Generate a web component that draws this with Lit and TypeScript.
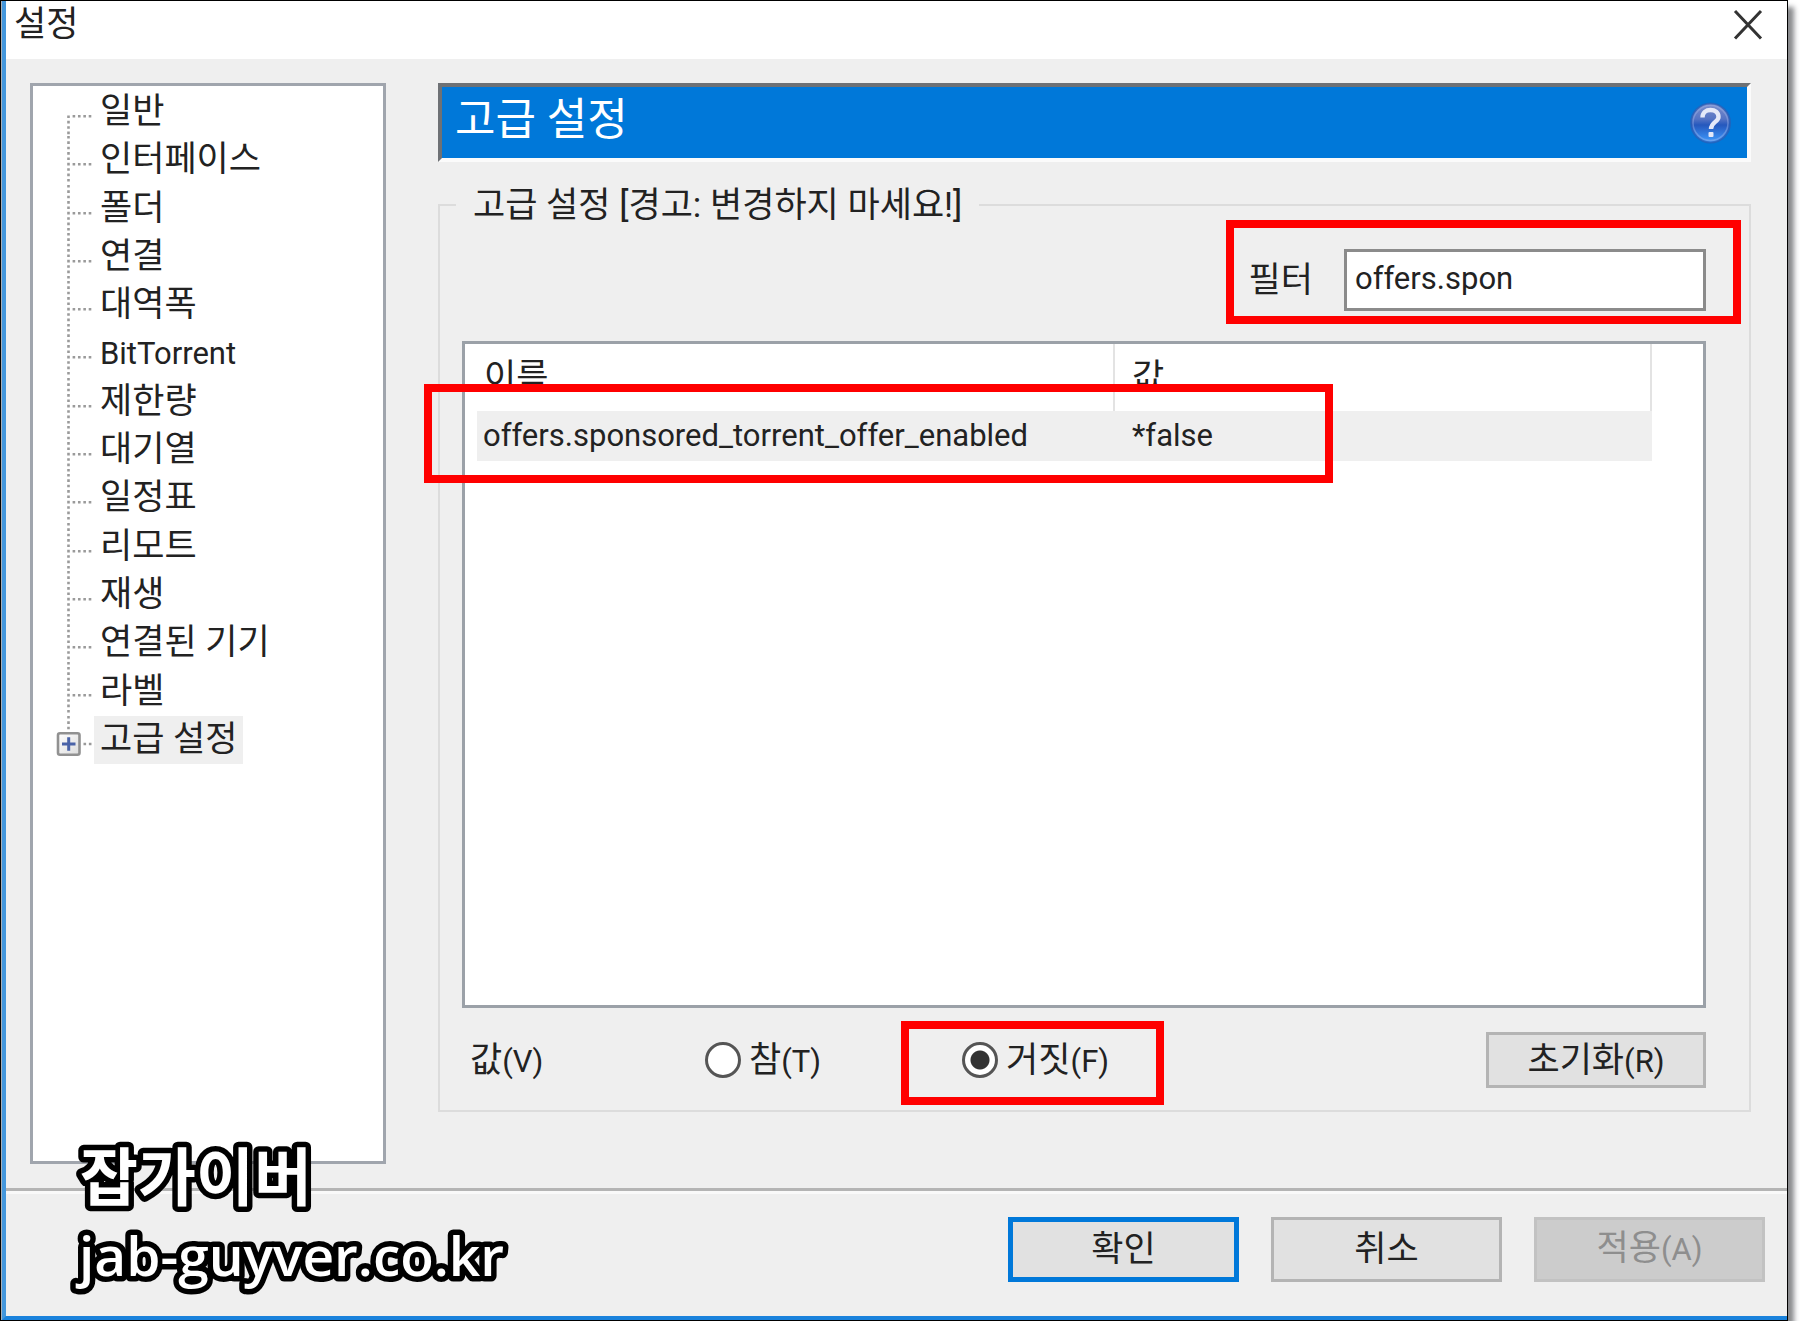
import { LitElement, html, css, svg } from "lit";
import { customElement, property, state } from "lit/decorators.js";
import { classMap } from "lit/directives/class-map.js";

const PAGES = [
  "일반",
  "인터페이스",
  "폴더",
  "연결",
  "대역폭",
  "BitTorrent",
  "제한량",
  "대기열",
  "일정표",
  "리모트",
  "재생",
  "연결된 기기",
  "라벨",
  "고급 설정",
];

@customElement("settings-tree")
export class SettingsTree extends LitElement {
  @property({ type: Number }) selected = PAGES.length - 1;

  static styles = css`
    :host {
      display: block;
      box-sizing: border-box;
      background: #fff;
      border: 3px solid #a0a5ad;
      padding-top: 2px;
    }
    .list {
      display: grid;
      grid-template-rows: repeat(14, 1fr);
      height: 676px;
      margin: 0;
      padding: 0 0 0 21px;
      list-style: none;
    }
    .row {
      display: flex;
      align-items: stretch;
      min-height: 0;
    }
    .branch {
      width: 40px;
      height: 48px;
      overflow: visible;
      flex: none;
    }
    .item {
      border: 0;
      margin: 0;
      padding: 0 6px;
      background: none;
      color: #222;
      font: inherit;
      line-height: 48px;
      text-align: left;
      white-space: nowrap;
    }
    .latin {
      font-size: 31px;
    }
    .selected {
      background: #efefef;
    }
  `;

  private branch(index: number) {
    const first = index === 0;
    const last = index === PAGES.length - 1;
    return html`<svg class="branch" viewBox="0 0 40 48" aria-hidden="true">
      <defs>
        <linearGradient id="face" x1="0" y1="0" x2="1" y2="1">
          <stop offset="0" stop-color="#ffffff" />
          <stop offset="1" stop-color="#dcdcdc" />
        </linearGradient>
      </defs>
      ${last
        ? svg`<path d="M14.5 0V15" stroke="#9a9a9a" stroke-width="2.6" stroke-dasharray="2.6 2.77" />
            <path d="M29.5 28H38" stroke="#9a9a9a" stroke-width="2.6" stroke-dasharray="2.6 2.77" />
            <rect x="4" y="17.3" width="21.5" height="21.5" rx="2" fill="url(#face)" stroke="#919191" stroke-width="2.6" />
            <path d="M8 28H21.5M14.7 21.3V34.7" stroke="#4a63a8" stroke-width="3" />`
        : svg`<path d=${first ? "M14.5 27.5V48.3" : "M14.5 0V48.3"} fill="none" stroke="#9a9a9a" stroke-width="2.6" stroke-dasharray="2.6 2.77" />
            <path d="M18.6 28.3H38" stroke="#9a9a9a" stroke-width="2.6" stroke-dasharray="2.6 2.77" />`}
    </svg>`;
  }

  render() {
    return html`<ul class="list">
      ${PAGES.map(
        (name, i) => html`<li class="row">
          ${this.branch(i)}
          <button
            type="button"
            class=${classMap({
              item: true,
              latin: /^[A-Za-z]/.test(name),
              selected: i === this.selected,
            })}
            @click=${() => (this.selected = i)}
          >${name}</button>
        </li>`
      )}
    </ul>`;
  }
}

@customElement("app-root")
export class AppRoot extends LitElement {
  @state() private value = false;

  static styles = css`
    :host {
      display: block;
      background: #fff;
      color: #222;
      font-family: Roboto, "Noto Sans CJK KR", sans-serif;
      font-size: 35px;
      line-height: 40px;
    }
    * {
      box-sizing: border-box;
    }
    .window {
      position: relative;
      display: flex;
      flex-direction: column;
      min-height: calc(100vh - 12px);
      margin-right: 12px;
      border: 1px solid #000;
      background: #a9b0b8;
      box-shadow: 6px 7px 5px rgba(40, 42, 48, 0.55);
    }
    .frame {
      flex: 1;
      display: flex;
      flex-direction: column;
      margin-left: 1px;
      border-left: 4px solid #4497dc;
      border-bottom: 4px solid #1a82dc;
      background: #efefef;
    }
    .titlebar {
      display: flex;
      justify-content: space-between;
      align-items: flex-start;
      height: 58px;
      padding: 0 22px 0 8px;
      background: #fff;
    }
    .title {
      margin: 0;
      font-size: 35px;
      font-weight: 400;
      line-height: 48px;
    }
    .close {
      width: 34px;
      height: 46px;
      padding: 0;
      border: 0;
      background: none;
    }
    .close svg,
    .help svg {
      display: block;
    }
    .body {
      flex: 1;
      display: grid;
      grid-template-columns: 356px minmax(0, 1fr);
      column-gap: 52px;
      padding: 24px 36px 24px 24px;
    }
    .page {
      display: flex;
      flex-direction: column;
      padding-bottom: 52px;
    }
    .banner {
      display: flex;
      justify-content: space-between;
      align-items: center;
      height: 79px;
      padding: 0 12px 0 13px;
      background: #0078d9;
      border: 4px solid;
      border-color: #6e7175 #fbfbfb #fbfbfb #6e7175;
    }
    .heading {
      margin: 0;
      color: #fff;
      font-size: 44px;
      font-weight: 400;
      line-height: 50px;
      padding-bottom: 6px;
    }
    .help {
      border: 0;
      padding: 0;
      background: none;
    }
    .group {
      flex: 1;
      display: flex;
      flex-direction: column;
      min-width: 0;
      margin: 23px 0 0;
      padding: 24px 43px 22px 22px;
      border: 2px solid #dcdcdc;
    }
    .legend {
      margin-left: -6px;
      padding: 2px 17px 0;
      line-height: 38px;
    }
    .latin {
      font-size: 31px;
    }
    .filter {
      position: relative;
      align-self: flex-end;
      display: flex;
      align-items: center;
      gap: 31px;
    }
    .filter-label {
      padding-top: 2px;
    }
    .filter-input {
      width: 362px;
      height: 62px;
      padding: 0 8px 4px;
      border: 3px solid #8b8b8b;
      border-radius: 0;
      background: #fff;
      color: #222;
      font: inherit;
      font-size: 31px;
      outline: 0;
    }
    .mark {
      position: absolute;
      border: 8px solid #f00;
      pointer-events: none;
    }
    .mark-filter {
      inset: -29px -35px -13px -23px;
    }
    .mark-row {
      left: -41px;
      top: 40px;
      width: 909px;
      height: 99px;
    }
    .mark-value {
      inset: -14px -55px -20px -61px;
    }
    .listview {
      position: relative;
      flex: 1;
      margin-top: 30px;
      padding: 0 51px 0 12px;
      border: 3px solid #9ba1a8;
      background: #fff;
    }
    .table {
      width: 100%;
      table-layout: fixed;
      border-collapse: separate;
      border-spacing: 0;
    }
    .col-name {
      width: 54.3%;
    }
    .th {
      height: 67px;
      padding: 0 7px;
      border-right: 2px solid #e3e3e3;
      font-weight: 400;
      text-align: left;
    }
    .td {
      height: 50px;
      padding: 0 6px;
      background: #efefef;
      font-size: 31px;
      white-space: nowrap;
    }
    .second {
      padding-left: 17px;
    }
    .values {
      display: flex;
      align-items: center;
      margin-top: 24px;
      padding-left: 8px;
    }
    .values-label {
      flex: 0 0 235px;
      padding-top: 2px;
    }
    .choice {
      position: relative;
      display: flex;
      align-items: center;
      gap: 8px;
      height: 50px;
      white-space: nowrap;
    }
    .choice + .choice {
      margin-left: 141px;
    }
    .choice-text {
      padding-top: 2px;
    }
    .radio {
      appearance: none;
      width: 36px;
      height: 36px;
      margin: 0;
      border: 3px solid #555;
      border-radius: 50%;
      background: #fff;
    }
    .radio:checked {
      background: radial-gradient(circle, #333 9px, #fff 10px);
    }
    .button {
      height: 65px;
      width: 231px;
      padding: 0;
      border: 3px solid #b4b4b4;
      background: #e1e1e1;
      color: #222;
      font: inherit;
    }
    .reset {
      width: 220px;
      height: 56px;
      margin-left: auto;
      padding-top: 2px;
    }
    .default {
      border: 5px solid #0078d9;
    }
    .button:disabled {
      border-color: #c2c2c2;
      background: #ccc;
      color: #8e8e8e;
    }
    .footer {
      display: flex;
      justify-content: flex-end;
      gap: 32px;
      padding: 26px 22px 34px;
      border-top: 3px solid #b4b4b4;
      box-shadow: inset 0 3px #f9f9f9;
    }
    .watermark {
      position: absolute;
      left: 60px;
      bottom: 16px;
      width: 480px;
      height: 180px;
      fill: #fff;
      stroke: #000;
      stroke-width: 11px;
      stroke-linejoin: round;
      paint-order: stroke fill;
      font-family: "Open Sans", "Noto Sans CJK KR", sans-serif;
      font-size: 55px;
      font-weight: 600;
      pointer-events: none;
    }
    .watermark-name {
      font-size: 63px;
      font-weight: 700;
    }
  `;

  private choose(value: boolean) {
    this.value = value;
  }

  render() {
    return html`<div class="window">
      <div class="frame">
        <header class="titlebar">
          <h1 class="title">설정</h1>
          <button class="close" type="button" aria-label="닫기">
            <svg width="34" height="46" viewBox="0 0 34 46" aria-hidden="true">
              <path d="M4 10L30 37.5M30 10L4 37.5" stroke="#333" stroke-width="3" />
            </svg>
          </button>
        </header>
        <main class="body">
          <settings-tree></settings-tree>
          <section class="page">
            <div class="banner">
              <h2 class="heading">고급 설정</h2>
              <button class="help" type="button" aria-label="도움말">
                <svg width="46" height="44" viewBox="0 0 46 44" aria-hidden="true">
                  <defs>
                    <linearGradient id="ball" x1="0" y1="0" x2="0" y2="1">
                      <stop offset="0" stop-color="#7f8fcb" />
                      <stop offset="0.4" stop-color="#5473c4" />
                      <stop offset="0.55" stop-color="#2558bd" />
                      <stop offset="1" stop-color="#3f9cff" />
                    </linearGradient>
                  </defs>
                  <circle cx="21.5" cy="22" r="19.5" fill="url(#ball)" stroke="#2b5cb4" stroke-opacity="0.7" stroke-width="2" />
                  <circle cx="21.5" cy="22" r="17.5" fill="none" stroke="#9db4e6" stroke-opacity="0.45" stroke-width="1.5" />
                  <path d="M13.5 16.5C13.5 11.5 17 9 21.5 9C26 9 29.5 11.5 29.5 16C29.5 21 22 21 22 28" fill="none" stroke="#e4e8f8" stroke-width="4.4" />
                  <rect x="19.5" y="31" width="5" height="5" rx="1" fill="#e4e8f8" />
                </svg>
              </button>
            </div>
            <fieldset class="group">
              <legend class="legend">고급 설정 [경고: 변경하지 마세요!]</legend>
              <div class="filter">
                <label class="filter-label" for="filter">필터</label>
                <input class="filter-input" id="filter" type="text" .value=${"offers.spon"} />
                <span class="mark mark-filter"></span>
              </div>
              <div class="listview">
                <table class="table">
                  <thead>
                    <tr>
                      <th class="th col-name" scope="col">이름</th>
                      <th class="th second" scope="col">값</th>
                    </tr>
                  </thead>
                  <tbody>
                    <tr>
                      <td class="td">offers.sponsored_torrent_offer_enabled</td>
                      <td class="td second">*false</td>
                    </tr>
                  </tbody>
                </table>
                <span class="mark mark-row"></span>
              </div>
              <div class="values" role="radiogroup" aria-labelledby="value-label">
                <span class="values-label" id="value-label">값<span class="latin">(V)</span></span>
                <label class="choice">
                  <input class="radio" type="radio" name="value" .checked=${this.value} @change=${() => this.choose(true)} />
                  <span class="choice-text">참<span class="latin">(T)</span></span>
                </label>
                <label class="choice">
                  <input class="radio" type="radio" name="value" .checked=${!this.value} @change=${() => this.choose(false)} />
                  <span class="choice-text">거짓<span class="latin">(F)</span></span>
                  <span class="mark mark-value"></span>
                </label>
                <button class="button reset" type="button">초기화<span class="latin">(R)</span></button>
              </div>
            </fieldset>
          </section>
        </main>
        <footer class="footer">
          <button class="button default" type="button">확인</button>
          <button class="button" type="button">취소</button>
          <button class="button" type="button" disabled>적용<span class="latin">(A)</span></button>
        </footer>
      </div>
      <svg class="watermark" viewBox="0 0 480 180">
        <text class="watermark-name" x="19" y="76">잡가이버</text>
        <text x="18" y="152">jab-guyver.co.kr</text>
      </svg>
    </div>`;
  }
}
